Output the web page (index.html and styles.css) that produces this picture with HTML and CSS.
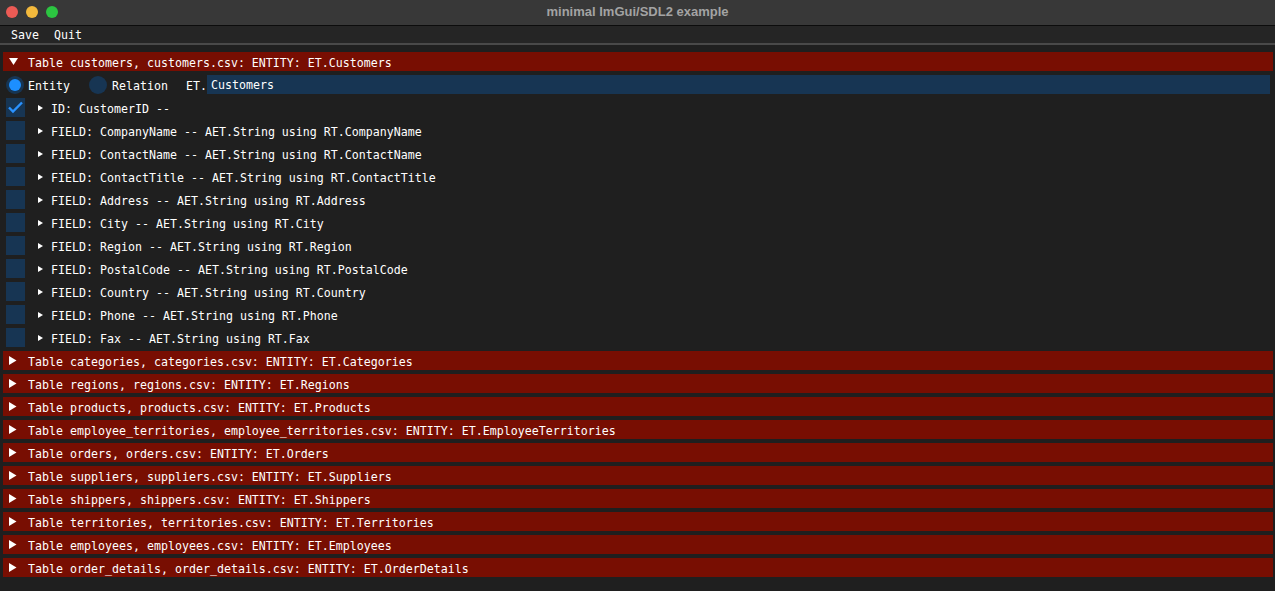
FILE: index.html
```html
<!DOCTYPE html>
<html>
<head>
<meta charset="utf-8">
<link rel="stylesheet" href="styles.css">
</head>
<body>
<div class="titlebar">
  <div class="lights">
    <span class="light red"></span>
    <span class="light yellow"></span>
    <span class="light green"></span>
  </div>
  <div class="title">minimal ImGui/SDL2 example</div>
</div>
<div class="menubar">
  <span class="menu-item">Save</span>
  <span class="menu-item">Quit</span>
</div>
<div class="content">
  <div class="header">
    <svg class="arrow-down" width="9" height="8" viewBox="0 0 9 8"><polygon points="0,0 9,0 4.5,7" fill="#fff"/></svg>
    <span class="label">Table customers, customers.csv: ENTITY: ET.Customers</span>
  </div>
  <div class="radio-row">
    <span class="radio on"><span class="dot"></span></span>
    <span class="rlabel">Entity</span>
    <span class="radio second"></span>
    <span class="rlabel">Relation</span>
    <span class="prefix">ET.</span>
    <span class="input">Customers</span>
  </div>
  <div class="field">
    <span class="check"><svg width="19" height="19" viewBox="0 0 19 19"><polyline points="3,9.5 7,13.5 16,4.5" fill="none" stroke="#2a92ff" stroke-width="2.4"/></svg></span>
    <svg class="arrow-small" width="5" height="6" viewBox="0 0 5 6"><polygon points="0,0 5,3 0,6" fill="#fff"/></svg>
    <span class="label">ID: CustomerID --</span>
  </div>
  <div class="field"><span class="check"></span><svg class="arrow-small" width="5" height="6" viewBox="0 0 5 6"><polygon points="0,0 5,3 0,6" fill="#fff"/></svg><span class="label">FIELD: CompanyName -- AET.String using RT.CompanyName</span></div>
  <div class="field"><span class="check"></span><svg class="arrow-small" width="5" height="6" viewBox="0 0 5 6"><polygon points="0,0 5,3 0,6" fill="#fff"/></svg><span class="label">FIELD: ContactName -- AET.String using RT.ContactName</span></div>
  <div class="field"><span class="check"></span><svg class="arrow-small" width="5" height="6" viewBox="0 0 5 6"><polygon points="0,0 5,3 0,6" fill="#fff"/></svg><span class="label">FIELD: ContactTitle -- AET.String using RT.ContactTitle</span></div>
  <div class="field"><span class="check"></span><svg class="arrow-small" width="5" height="6" viewBox="0 0 5 6"><polygon points="0,0 5,3 0,6" fill="#fff"/></svg><span class="label">FIELD: Address -- AET.String using RT.Address</span></div>
  <div class="field"><span class="check"></span><svg class="arrow-small" width="5" height="6" viewBox="0 0 5 6"><polygon points="0,0 5,3 0,6" fill="#fff"/></svg><span class="label">FIELD: City -- AET.String using RT.City</span></div>
  <div class="field"><span class="check"></span><svg class="arrow-small" width="5" height="6" viewBox="0 0 5 6"><polygon points="0,0 5,3 0,6" fill="#fff"/></svg><span class="label">FIELD: Region -- AET.String using RT.Region</span></div>
  <div class="field"><span class="check"></span><svg class="arrow-small" width="5" height="6" viewBox="0 0 5 6"><polygon points="0,0 5,3 0,6" fill="#fff"/></svg><span class="label">FIELD: PostalCode -- AET.String using RT.PostalCode</span></div>
  <div class="field"><span class="check"></span><svg class="arrow-small" width="5" height="6" viewBox="0 0 5 6"><polygon points="0,0 5,3 0,6" fill="#fff"/></svg><span class="label">FIELD: Country -- AET.String using RT.Country</span></div>
  <div class="field"><span class="check"></span><svg class="arrow-small" width="5" height="6" viewBox="0 0 5 6"><polygon points="0,0 5,3 0,6" fill="#fff"/></svg><span class="label">FIELD: Phone -- AET.String using RT.Phone</span></div>
  <div class="field"><span class="check"></span><svg class="arrow-small" width="5" height="6" viewBox="0 0 5 6"><polygon points="0,0 5,3 0,6" fill="#fff"/></svg><span class="label">FIELD: Fax -- AET.String using RT.Fax</span></div>
  <div class="header"><svg class="arrow-right" width="8" height="9" viewBox="0 0 8 9"><polygon points="0,0 7.5,4.5 0,9" fill="#fff"/></svg><span class="label">Table categories, categories.csv: ENTITY: ET.Categories</span></div>
  <div class="header"><svg class="arrow-right" width="8" height="9" viewBox="0 0 8 9"><polygon points="0,0 7.5,4.5 0,9" fill="#fff"/></svg><span class="label">Table regions, regions.csv: ENTITY: ET.Regions</span></div>
  <div class="header"><svg class="arrow-right" width="8" height="9" viewBox="0 0 8 9"><polygon points="0,0 7.5,4.5 0,9" fill="#fff"/></svg><span class="label">Table products, products.csv: ENTITY: ET.Products</span></div>
  <div class="header"><svg class="arrow-right" width="8" height="9" viewBox="0 0 8 9"><polygon points="0,0 7.5,4.5 0,9" fill="#fff"/></svg><span class="label">Table employee_territories, employee_territories.csv: ENTITY: ET.EmployeeTerritories</span></div>
  <div class="header"><svg class="arrow-right" width="8" height="9" viewBox="0 0 8 9"><polygon points="0,0 7.5,4.5 0,9" fill="#fff"/></svg><span class="label">Table orders, orders.csv: ENTITY: ET.Orders</span></div>
  <div class="header"><svg class="arrow-right" width="8" height="9" viewBox="0 0 8 9"><polygon points="0,0 7.5,4.5 0,9" fill="#fff"/></svg><span class="label">Table suppliers, suppliers.csv: ENTITY: ET.Suppliers</span></div>
  <div class="header"><svg class="arrow-right" width="8" height="9" viewBox="0 0 8 9"><polygon points="0,0 7.5,4.5 0,9" fill="#fff"/></svg><span class="label">Table shippers, shippers.csv: ENTITY: ET.Shippers</span></div>
  <div class="header"><svg class="arrow-right" width="8" height="9" viewBox="0 0 8 9"><polygon points="0,0 7.5,4.5 0,9" fill="#fff"/></svg><span class="label">Table territories, territories.csv: ENTITY: ET.Territories</span></div>
  <div class="header"><svg class="arrow-right" width="8" height="9" viewBox="0 0 8 9"><polygon points="0,0 7.5,4.5 0,9" fill="#fff"/></svg><span class="label">Table employees, employees.csv: ENTITY: ET.Employees</span></div>
  <div class="header"><svg class="arrow-right" width="8" height="9" viewBox="0 0 8 9"><polygon points="0,0 7.5,4.5 0,9" fill="#fff"/></svg><span class="label">Table order_details, order_details.csv: ENTITY: ET.OrderDetails</span></div>
</div>
</body>
</html>
```

FILE: styles.css
```css
* { box-sizing: border-box; }
html, body {
  margin: 0;
  padding: 0;
  width: 1275px;
  height: 591px;
  overflow: hidden;
  background: #1f1f1f;
  color: #ffffff;
  font-family: "DejaVu Sans Mono", "Liberation Mono", monospace;
  font-size: 11.6px;
  letter-spacing: 0.016px;
}
.titlebar {
  position: relative;
  height: 26px;
  background: #383838;
  border-bottom: 1px solid #0c0c0c;
  display: flex;
  align-items: center;
  justify-content: center;
}
.lights {
  position: absolute;
  left: 6px;
  top: 6px;
  display: flex;
  gap: 8px;
}
.light {
  width: 12px;
  height: 12px;
  border-radius: 50%;
  display: block;
}
.red { background: #ec5b55; }
.yellow { background: #f3b93c; }
.green { background: #2cc541; }
.title {
  font-family: "Liberation Sans", Arial, sans-serif;
  font-weight: bold;
  font-size: 13px;
  letter-spacing: 0;
  color: #a3a3a3;
  margin-top: -3px;
}
.menubar {
  height: 19px;
  background: #252525;
  border-bottom: 2px solid #494949;
  display: flex;
  align-items: center;
  padding-left: 11px;
  gap: 15px;
  line-height: 17px;
}
.menu-item { padding-top: 1px; }
.content {
  padding-top: 7px;
  display: flex;
  flex-direction: column;
  gap: 4px;
}
.header {
  height: 19px;
  margin: 0 2px 0 3px;
  background: #780e02;
  display: flex;
  align-items: center;
}
.header svg { display: block; flex: none; }
.arrow-down { margin-left: 6px; margin-right: 10px; margin-top: 1px; }
.arrow-right { margin-left: 6px; margin-right: 11px; }
.label { white-space: pre; padding-top: 2px; }
.rlabel { padding-top: 2px; }
.radio-row {
  height: 19px;
  display: flex;
  align-items: center;
  padding-left: 6px;
}
.radio {
  width: 18px;
  height: 18px;
  border-radius: 50%;
  background: #173553;
  display: flex;
  align-items: center;
  justify-content: center;
  flex: none;
  margin-right: 4px;
}
.radio .dot {
  width: 12px;
  height: 12px;
  border-radius: 50%;
  background: #1c8fff;
}
.radio.second { margin-left: 19px; margin-right: 5px; }
.prefix { margin-left: 18px; width: 21px; padding-top: 2px; }
.input {
  flex: 1;
  height: 19px;
  margin-right: 5px;
  background: #173553;
  padding-left: 4px;
  line-height: 21px;
}
.field {
  height: 19px;
  display: flex;
  align-items: center;
  padding-left: 6px;
}
.check {
  width: 19px;
  height: 19px;
  background: #173553;
  flex: none;
  display: block;
}
.check svg { display: block; }
.arrow-small { display: block; flex: none; margin-left: 13px; margin-right: 8px; }
```
